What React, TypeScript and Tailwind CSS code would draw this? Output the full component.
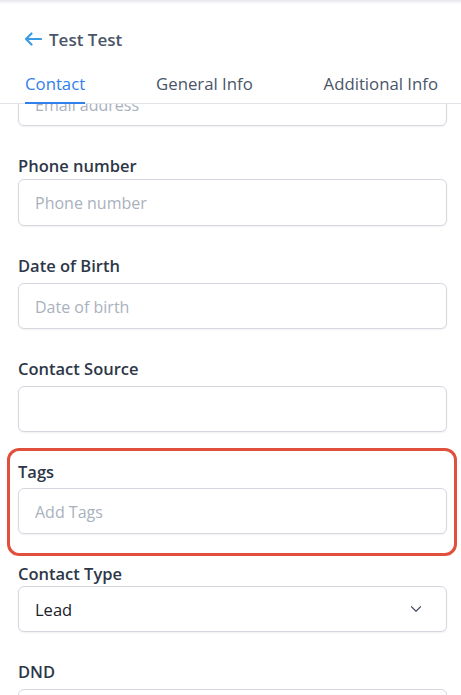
import { ChevronDown } from 'lucide-react';

const font = { fontFamily: '"Open Sans", "Noto Sans", sans-serif' };

type FieldProps = {
  label: string;
  placeholder?: string;
  gap: string;
  height?: string;
};

function Field({ label, placeholder, gap, height = 'h-[46px]' }: FieldProps) {
  return (
    <div className="mb-[28px]">
      <label className={`block text-[16.5px] leading-6 font-semibold text-[#2d3748] ${gap}`}>{label}</label>
      <input
        type="text"
        placeholder={placeholder}
        className={`w-full ${height} rounded-[6px] border border-[#d5d8de] bg-white px-4 pt-px text-[16px] text-[#1a202c] placeholder-[#a9b1bd] shadow-[0_1px_2px_rgba(0,0,0,0.06)] outline-none`}
      />
    </div>
  );
}

export default function App() {
  return (
    <div className="w-[461px] h-[695px] bg-white overflow-hidden flex flex-col" style={font}>
      {/* Header */}
      <div className="relative bg-white z-10">
        <div className="h-[4px] bg-linear-to-b from-gray-200 to-white" />
        <div className="flex items-center gap-[7px] pl-[24px] pt-[22px] h-[50px]">
          <svg width="18" height="14" viewBox="0 0 18 14" fill="none" className="mt-[-3px]">
            <path d="M17 7H2M7.5 1.5L2 7l5.5 5.5" stroke="#3b9be3" strokeWidth="2.2" strokeLinecap="round" strokeLinejoin="round" />
          </svg>
          <h1 className="text-[17px] leading-7 font-semibold text-[#4a5568]">Test Test</h1>
        </div>
        <div className="flex justify-between pl-[25px] pr-[23px] mt-[18px] border-b border-[#dfe3e8]">
          <button className="text-[16.75px] leading-6 pb-[6px] border-b-2 border-[#2f80ed] text-[#2f80ed] -mb-px">Contact</button>
          <button className="text-[16.75px] leading-6 pb-[6px] border-b-2 border-transparent text-[#4a5568] -mb-px">General Info</button>
          <button className="text-[16.75px] leading-6 pb-[6px] border-b-2 border-transparent text-[#4a5568] -mb-px">Additional Info</button>
        </div>
      </div>

      {/* Scrolling form */}
      <div className="flex-1 overflow-hidden">
        <div className="-mt-[24px] pl-[18px] pr-[14px]">
          <div className="mb-[28px]">
            <input
              type="text"
              placeholder="Email address"
              className="w-full h-[46px] rounded-[6px] border border-[#d5d8de] px-4 pt-[3px] text-[16px] placeholder-[#a9b1bd] shadow-[0_1px_2px_rgba(0,0,0,0.06)] outline-none"
            />
          </div>
          <Field label="Phone number" placeholder="Phone number" gap="mb-px" height="h-[47px]" />
          <Field label="Date of Birth" placeholder="Date of birth" gap="mb-[5px]" />
          <Field label="Contact Source" gap="mb-[5px]" />

          <div className="relative">
            <Field label="Tags" placeholder="Add Tags" gap="mb-[4px]" />
            <div className="pointer-events-none absolute -top-[12px] -left-[11px] -right-[10px] -bottom-[22px] rounded-[12px] border-[3px] border-[#e0503c]" />
          </div>

          <div className="mb-[28px] mt-px">
            <label className="block text-[16.5px] leading-6 font-semibold text-[#2d3748]">Contact Type</label>
            <div className="flex items-center justify-between w-full h-[46px] rounded-[6px] border border-[#d5d8de] bg-white pl-4 pr-[21px] shadow-[0_1px_2px_rgba(0,0,0,0.06)]">
              <span className="text-[16.5px] text-[#1a202c] pt-[3px]">Lead</span>
              <ChevronDown size={18} strokeWidth={1.6} className="text-[#4a5568]" />
            </div>
          </div>

          <Field label="DND" gap="mb-[5px]" />
        </div>
      </div>
    </div>
  );
}
